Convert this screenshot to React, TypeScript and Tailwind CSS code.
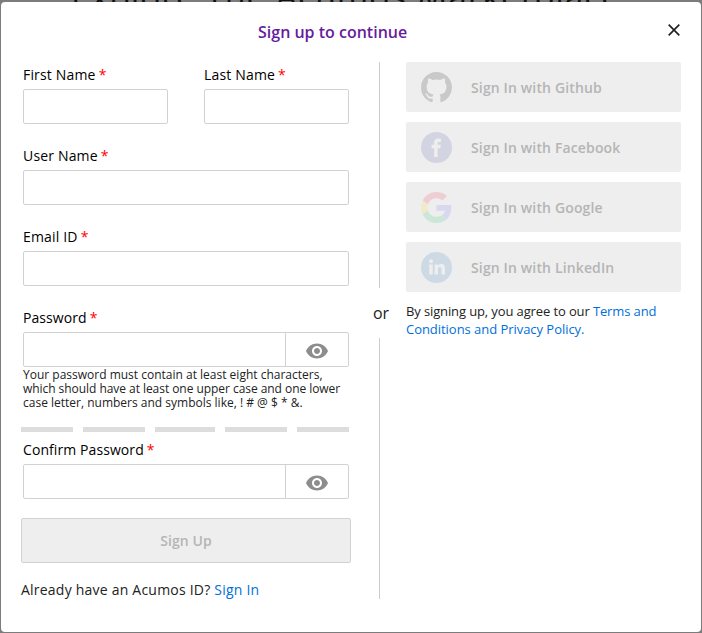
import React from "react";

function Label({ children, tracking = "tracking-[0.17px]" }: { children: React.ReactNode; tracking?: string }) {
  return (
    <label className={`block h-5 text-[14px] leading-5 text-black ${tracking}`}>
      {children}
      <span className="ml-[3px] text-[#ff0000]">*</span>
    </label>
  );
}

function Field({ label, className = "" }: { label: string; className?: string }) {
  return (
    <div className={className}>
      <Label>{label}</Label>
      <input className="mt-1 block h-[35px] w-full rounded-[2px] border border-[#d2d2d2] bg-white px-2 outline-none" />
    </div>
  );
}

function PasswordField({ label }: { label: string }) {
  return (
    <div>
      <Label tracking="tracking-[0.08px]">{label}</Label>
      <div className="mt-1 flex h-[35px] rounded-[2px] border border-[#d2d2d2]">
        <input type="password" className="min-w-0 flex-1 px-2 outline-none" />
        <button className="flex w-[63px] items-center justify-center border-l border-[#d2d2d2] pt-[3px]">
          <svg width="24" height="24" viewBox="0 0 24 24" fill="#8d8d8d">
            <path d="M12 4.5C7 4.5 2.73 7.61 1 12c1.73 4.39 6 7.5 11 7.5s9.27-3.11 11-7.5c-1.73-4.39-6-7.5-11-7.5zM12 17c-2.76 0-5-2.24-5-5s2.24-5 5-5 5 2.24 5 5-2.24 5-5 5zm0-8c-1.66 0-3 1.34-3 3s1.34 3 3 3 3-1.34 3-3-1.34-3-3-3z" />
          </svg>
        </button>
      </div>
    </div>
  );
}

function GithubIcon() {
  return (
    <svg width="31" height="31" viewBox="0 0 16 16" fill="#c9c9c9">
      <path d="M8 0C3.58 0 0 3.58 0 8c0 3.54 2.29 6.53 5.47 7.59.4.07.55-.17.55-.38 0-.19-.01-.82-.01-1.49-2.01.37-2.53-.49-2.69-.94-.09-.23-.48-.94-.82-1.13-.28-.15-.68-.52-.01-.53.63-.01 1.08.58 1.23.82.72 1.21 1.87.87 2.33.66.07-.52.28-.87.51-1.07-1.78-.2-3.64-.89-3.64-3.95 0-.87.31-1.59.82-2.15-.08-.2-.36-1.02.08-2.12 0 0 .67-.21 2.2.82.64-.18 1.32-.27 2-.27s1.36.09 2 .27c1.53-1.04 2.2-.82 2.2-.82.44 1.1.16 1.92.08 2.12.51.56.82 1.27.82 2.15 0 3.07-1.87 3.75-3.65 3.95.29.25.54.73.54 1.48 0 1.07-.01 1.93-.01 2.2 0 .21.15.46.55.38A8.01 8.01 0 0 0 16 8c0-4.42-3.58-8-8-8z" />
    </svg>
  );
}

function FacebookIcon() {
  return (
    <svg width="31" height="31" viewBox="0 0 31 31">
      <circle cx="15.5" cy="15.5" r="15.5" fill="#d3d4e2" />
      <path d="M13.1 25V16.3h-2.5v-3.6h2.5v-2.2c0-2.6 1.5-4 3.9-4 1.1 0 2.1.1 2.9.2v3.3h-1.8c-1.2 0-1.5.6-1.5 1.4v1.3h3.2l-.5 3.6h-2.7V25z" fill="#eee" />
    </svg>
  );
}

function GoogleIcon() {
  return (
    <svg width="31" height="31" viewBox="0 0 48 48">
      <path fill="#eeced2" d="M24 9.5c3.54 0 6.71 1.22 9.21 3.6l6.85-6.85C35.9 2.38 30.47 0 24 0 14.62 0 6.51 5.38 2.56 13.22l7.98 6.19C12.43 13.72 17.74 9.5 24 9.5z" />
      <path fill="#d8d8ee" d="M46.98 24.55c0-1.57-.15-3.09-.38-4.55H24v9.02h12.94c-.58 2.96-2.26 5.48-4.78 7.18l7.73 6c4.51-4.18 7.09-10.36 7.09-17.65z" />
      <path fill="#f0e9cb" d="M10.53 28.59A14.5 14.5 0 0 1 9.77 24c0-1.6.27-3.14.76-4.59l-7.98-6.19A23.9 23.9 0 0 0 0 24c0 3.88.92 7.54 2.56 10.78z" />
      <path fill="#cce7d8" d="M24 48c6.48 0 11.93-2.13 15.89-5.81l-7.73-6c-2.15 1.45-4.92 2.3-8.16 2.3-6.26 0-11.57-4.22-13.47-9.91l-7.98 6.19C6.51 42.62 14.62 48 24 48z" />
    </svg>
  );
}

function LinkedInIcon() {
  return (
    <svg width="31" height="31" viewBox="0 0 31 31">
      <circle cx="15.5" cy="15.5" r="15.5" fill="#cddae6" />
      <g fill="#eee">
        <circle cx="10" cy="9.2" r="2" />
        <path d="M8.2 12.4h3.5V22.5H8.2zM13.6 12.4h3.3v1.4c.6-1 1.7-1.7 3.2-1.7 3.1 0 3.9 2 3.9 4.8v5.6h-3.5v-5c0-1.3-.2-2.5-1.7-2.5s-1.8 1.2-1.8 2.5v5h-3.4z" />
      </g>
    </svg>
  );
}

function SocialButton({ icon, children }: { icon: React.ReactNode; children: React.ReactNode }) {
  return (
    <button className="flex h-[50px] w-full items-center rounded-[2px] bg-[#eee] pl-[15px] text-[14px] font-semibold tracking-[0.14px] text-[#b5b5b5]">
      {icon}
      <span className="ml-[19px]">{children}</span>
    </button>
  );
}

export default function App() {
  return (
    <div className="relative h-[633px] w-[702px] overflow-hidden bg-[#7c7c7c] pt-[2px] pr-px pb-px pl-px font-['Open_Sans','Noto_Sans',sans-serif]">
      <div className="absolute top-[-23px] left-[71px] text-[34px] leading-[38px] tracking-[0.75px] whitespace-nowrap text-[#111]">
        Explore The Acumos Marketplace
      </div>
      <div className="relative h-[630px] rounded-[4px] bg-white">
        <header className="flex h-[60px] items-start pl-[257px]">
          <h1 className="mt-[18px] text-[16px] leading-6 font-semibold text-[#671c9d]">Sign up to continue</h1>
          <button className="mt-[22px] mr-[21px] ml-auto" aria-label="Close">
            <svg width="12" height="12" viewBox="0 0 12 12" stroke="#222" strokeWidth="1.7">
              <path d="M.7.7l10.6 10.6M11.3.7L.7 11.3" />
            </svg>
          </button>
        </header>
        <div className="flex pl-5">
          <form className="w-[330px]">
            <div className="px-[2px] pt-[3px]">
              <div className="flex justify-between">
                <Field label="First Name" className="w-[145px]" />
                <Field label="Last Name" className="w-[145px]" />
              </div>
              <Field label="User Name" className="mt-[22px]" />
              <Field label="Email ID" className="mt-[22px]" />
              <div className="mt-[22px]">
                <PasswordField label="Password" />
              </div>
              <p className="h-[43px] pt-px text-[12px] leading-[14px] whitespace-nowrap text-[#222]">
                Your password must contain at least eight characters,<br />
                <span className="tracking-[-0.05px]">which should have at least one upper case and one lower</span><br />
                case letter, numbers and symbols like, ! # @ $ * &amp;.
              </p>
            </div>
            <div className="mt-[17px] flex h-[5px] gap-[10px]">
              <div className="w-[52px] bg-[#ddd]" />
              <div className="w-[62px] bg-[#ddd]" />
              <div className="w-[60px] bg-[#ddd]" />
              <div className="w-[62px] bg-[#ddd]" />
              <div className="w-[52px] bg-[#ddd]" />
            </div>
            <div className="mt-2 px-[2px]">
              <PasswordField label="Confirm Password" />
            </div>
            <button className="mt-[19px] h-[45px] w-full rounded-[2px] border border-[#d2d2d2] bg-[#eee] text-[14px] font-semibold tracking-[0.1px] text-[#b5b5b5]">
              Sign Up
            </button>
            <p className="mt-[17px] text-[14px] leading-5 tracking-[0.22px] text-[#222]">
              Already have an Acumos ID? <a className="text-[#006fdb]">Sign In</a>
            </p>
          </form>
          <div className="ml-[22px] flex w-[17px] flex-col items-center">
            <div className="ml-[-4px] h-[226px] w-px bg-[#ccc]" />
            <span className="mr-px h-[50px] text-[16px] leading-[50px] text-[#222]">or</span>
            <div className="ml-[-4px] h-[261px] w-px bg-[#ccc]" />
          </div>
          <div className="ml-4 w-[275px]">
            <div className="flex flex-col gap-[10px]">
              <SocialButton icon={<GithubIcon />}>Sign In with Github</SocialButton>
              <SocialButton icon={<FacebookIcon />}>Sign In with Facebook</SocialButton>
              <SocialButton icon={<GoogleIcon />}>Sign In with Google</SocialButton>
              <SocialButton icon={<LinkedInIcon />}>Sign In with LinkedIn</SocialButton>
            </div>
            <p className="mt-[10px] text-[13px] leading-[18px] tracking-[-0.12px] text-[#222]">
              By signing up, you agree to our{" "}
              <a className="text-[#006fdb]">
                Terms and<br />
                <span className="tracking-[-0.04px]">Conditions and Privacy Policy.</span>
              </a>
            </p>
          </div>
        </div>
      </div>
    </div>
  );
}
